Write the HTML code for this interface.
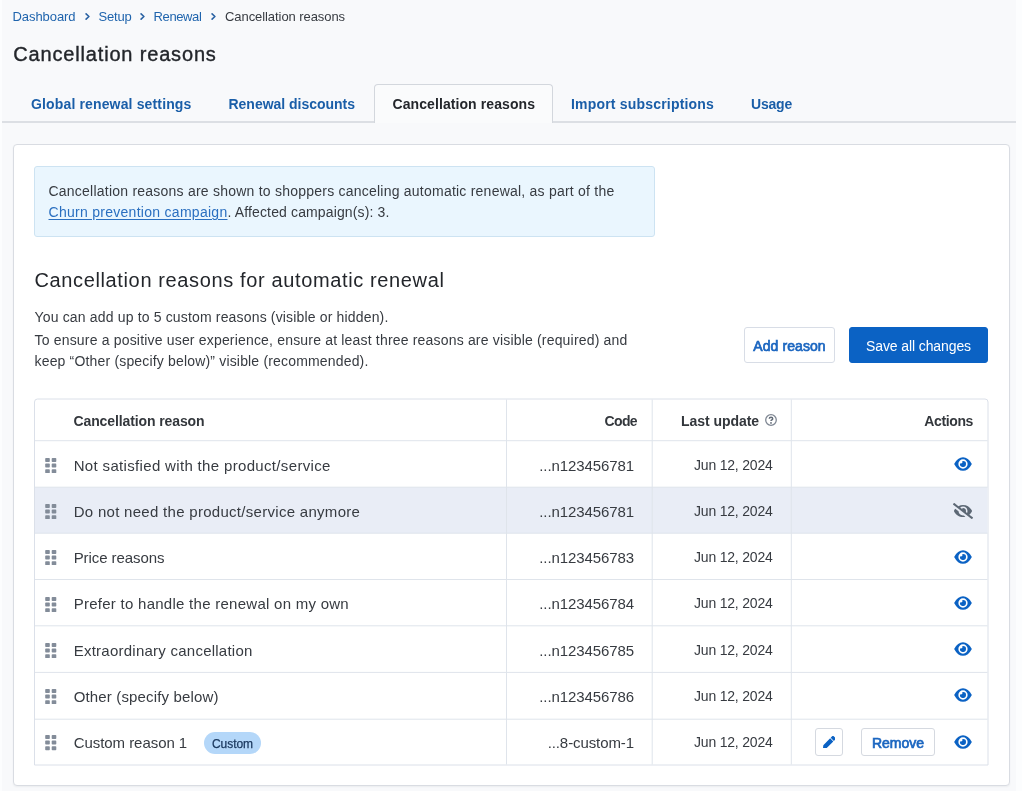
<!DOCTYPE html>
<html><head><meta charset="utf-8"><title>Cancellation reasons</title>
<style>
*{box-sizing:border-box;margin:0;padding:0}
html,body{width:1022px;height:791px;overflow:hidden}
body{background:#f8f9fb;font-family:"Liberation Sans",sans-serif;color:#373b41;position:relative}
#root{position:absolute;left:0;top:0;width:1022px;height:791px;will-change:transform}
.abs{position:absolute;white-space:nowrap}
.edgeL{left:0;top:0;width:2px;height:791px;background:#fcfdfe}
.edgeR{left:1016px;top:0;width:6px;height:791px;background:#fcfdfe}
.bc{top:9px;font-size:13px;line-height:16px;color:#1f64ad}
.bc.cur{color:#373b41}
.chev{top:13.3px;width:5px;height:7px}
.title{left:13.3px;top:42px;font-size:20px;line-height:24px;font-weight:400;-webkit-text-stroke:.38px #23262b;color:#23262b;letter-spacing:.83px}
.tabline{left:2px;top:121px;width:1014px;height:2px;background:#dcdfe4}
.tab{top:96px;font-size:14px;line-height:16px;font-weight:700;color:#1a5ea8}
.tabact{left:374px;top:84px;width:179px;height:39px;background:#fafbfc;border:1px solid #d3d7dd;border-bottom:none;border-radius:4px 4px 0 0}
.panel{left:13px;top:144px;width:997px;height:642px;background:#fff;border:1px solid #d9dce2;border-radius:4px;box-shadow:0 1px 2px rgba(40,50,70,.06)}
.info{left:34px;top:166px;width:621px;height:71px;background:#eaf6fe;border:1px solid #cde3f2;border-radius:3px}
.t14{font-size:14px;line-height:21px;color:#373b41}
a.lnk{color:#2a6fc0;text-decoration:underline;text-underline-offset:2px}
.h2{font-size:20px;line-height:26px;color:#23262b;letter-spacing:.63px}
.btn{display:flex;align-items:center;justify-content:center;font-size:14px;font-weight:700;color:#1b66c0;background:#fff;border:1px solid #d8dde6;border-radius:3px}
.btn.pri{background:#0b62c4;border-color:#0b62c4;color:#fff;font-weight:400}
.grid{left:30px;top:395px;width:962px;height:375px}
.th{font-size:14px;line-height:20px;font-weight:700;color:#33373c}
.td{font-size:15px;line-height:20px;color:#373b41}
.td.d{font-size:14px}
.badge{display:flex;align-items:center;justify-content:center;border-radius:11px;background:#b4d7f9;color:#1c3a60;font-size:12px}
.sbtn{display:flex;align-items:center;justify-content:center;background:#fff;border:1px solid #d5d9e0;border-radius:3px;font-size:14px;font-weight:700;color:#1b66c0}
</style></head><body>
<div id="root">
<div class="abs edgeL"></div><div class="abs edgeR"></div>

<!-- breadcrumb -->
<div class="abs bc" style="left:12.5px;letter-spacing:-.07px">Dashboard</div>
<svg class="abs chev" style="left:85px" viewBox="0 0 5 7"><path d="M1.1 .9 3.9 3.5 1.1 6.1" fill="none" stroke="#2a62a3" stroke-width="1.6" stroke-linecap="round" stroke-linejoin="round"/></svg>
<div class="abs bc" style="left:98.5px;letter-spacing:-.2px">Setup</div>
<svg class="abs chev" style="left:140px" viewBox="0 0 5 7"><path d="M1.1 .9 3.9 3.5 1.1 6.1" fill="none" stroke="#2a62a3" stroke-width="1.6" stroke-linecap="round" stroke-linejoin="round"/></svg>
<div class="abs bc" style="left:153.5px;letter-spacing:-.37px">Renewal</div>
<svg class="abs chev" style="left:210.5px" viewBox="0 0 5 7"><path d="M1.1 .9 3.9 3.5 1.1 6.1" fill="none" stroke="#2a62a3" stroke-width="1.6" stroke-linecap="round" stroke-linejoin="round"/></svg>
<div class="abs bc cur" style="left:225px;letter-spacing:-.07px">Cancellation reasons</div>
<div class="abs title">Cancellation reasons</div>

<!-- tabs -->
<div class="abs tabline"></div><div class="abs tabact"></div>
<div class="abs tab" style="left:31px;letter-spacing:0.145px">Global renewal settings</div>
<div class="abs tab" style="left:228.5px;letter-spacing:-0.02px">Renewal discounts</div>
<div class="abs tab" style="left:392.5px;color:#23262b;letter-spacing:0.085px">Cancellation reasons</div>
<div class="abs tab" style="left:571px;letter-spacing:0.19px">Import subscriptions</div>
<div class="abs tab" style="left:751px;letter-spacing:-0.2px">Usage</div>

<!-- panel -->
<div class="abs panel"></div><div class="abs info"></div>
<div class="abs t14" style="left:48.5px;top:181px;letter-spacing:.229px">Cancellation reasons are shown to shoppers canceling automatic renewal, as part of the</div>
<div class="abs t14" style="left:48.5px;top:202px"><a class="lnk" style="letter-spacing:.28px">Churn prevention campaign</a><span style="letter-spacing:.135px">. Affected campaign(s): 3.</span></div>
<div class="abs h2" style="left:34.5px;top:267px">Cancellation reasons for automatic renewal</div>
<div class="abs t14" style="left:34.5px;top:307px;letter-spacing:.163px">You can add up to 5 custom reasons (visible or hidden).</div>
<div class="abs t14" style="left:34.5px;top:329.7px;letter-spacing:.182px">To ensure a positive user experience, ensure at least three reasons are visible (required) and</div>
<div class="abs t14" style="left:34.5px;top:351px;letter-spacing:.172px">keep “Other (specify below)” visible (recommended).</div>
<div class="abs btn" style="left:744px;top:327px;width:91px;height:36px"><span style="letter-spacing:.09px;font-weight:400;-webkit-text-stroke:.7px #1b66c0;position:relative;top:1px">Add reason</span></div>
<div class="abs btn pri" style="left:849px;top:327px;width:139px;height:36px"><span style="letter-spacing:-.1px;position:relative;top:1px">Save all changes</span></div>

<!-- table grid -->
<svg class="abs grid" viewBox="0 0 962 375"><path d="M4.5 370.0V7.0a3 3 0 0 1 3-3H955.0a3 3 0 0 1 3 3V370.0Z" fill="#fff" stroke="#dbe0e9" stroke-width="1"/><rect x="5.0" y="92.19999999999999" width="952.5" height="46.00000000000006" fill="#e9edf6"/><rect x="5.0" y="45.20" width="952.5" height="1" fill="#dfe4eb"/><rect x="5.0" y="91.70" width="952.5" height="1" fill="#dfe4eb"/><rect x="5.0" y="137.70" width="952.5" height="1" fill="#dfe4eb"/><rect x="5.0" y="184.00" width="952.5" height="1" fill="#dfe4eb"/><rect x="5.0" y="230.30" width="952.5" height="1" fill="#dfe4eb"/><rect x="5.0" y="276.90" width="952.5" height="1" fill="#dfe4eb"/><rect x="5.0" y="323.70" width="952.5" height="1" fill="#dfe4eb"/><rect x="476.00" y="4.5" width="1" height="365.0" fill="#dfe4eb"/><rect x="621.70" y="4.5" width="1" height="365.0" fill="#dfe4eb"/><rect x="760.80" y="4.5" width="1" height="365.0" fill="#dfe4eb"/></svg>
<div class="abs th" style="left:73.5px;top:411px;letter-spacing:-.11px">Cancellation reason</div>
<div class="abs th" style="right:385px;top:411px;letter-spacing:-.62px">Code</div>
<div class="abs th" style="left:681px;top:411px;letter-spacing:-.05px">Last update</div>
<svg class="abs" style="left:765px;top:414px;width:12px;height:12px" viewBox="0 0 12 12"><circle cx="6" cy="6" r="5.3" fill="none" stroke="#7f8793" stroke-width="1.3"/><path d="M4.3 4.8c0-1 .75-1.6 1.7-1.6s1.7.6 1.7 1.5c0 1.2-1.7 1.2-1.7 2.4" fill="none" stroke="#626b77" stroke-width="1.5"/><circle cx="6" cy="8.9" r=".9" fill="#626b77"/></svg>
<div class="abs th" style="right:49px;top:411px;letter-spacing:-.37px">Actions</div>

<!-- row 1 -->
<svg class="abs" style="left:44.5px;top:457.70px;width:12px;height:15.2px" viewBox="0 0 12 15.2"><rect x="0.2" y="0" width="4.6" height="4" rx=".8" fill="#838c99"/><rect x="0.2" y="5.6" width="4.6" height="4" rx=".8" fill="#838c99"/><rect x="0.2" y="11.2" width="4.6" height="4" rx=".8" fill="#838c99"/><rect x="6.7" y="0" width="4.6" height="4" rx=".8" fill="#838c99"/><rect x="6.7" y="5.6" width="4.6" height="4" rx=".8" fill="#838c99"/><rect x="6.7" y="11.2" width="4.6" height="4" rx=".8" fill="#838c99"/></svg>
<div class="abs td" style="left:73.7px;top:455.50px;letter-spacing:0.336px">Not satisfied with the product/service</div>
<div class="abs td" style="right:388px;top:455.50px;letter-spacing:-.09px">...n123456781</div>
<div class="abs td d" style="left:694px;top:454.65px;letter-spacing:-.2px">Jun 12, 2024</div>
<svg class="abs" style="left:954.4px;top:457.05px;width:18px;height:14px" viewBox="0 0 18 14"><path fill="#0b62c4" fill-rule="evenodd" d="M.15 7C2.5 2.4 5.6.15 9 .15S15.5 2.4 17.85 7C15.5 11.6 12.4 13.85 9 13.85S2.5 11.6.15 7ZM9 2.35a4.65 4.65 0 1 0 0 9.3 4.65 4.65 0 0 0 0-9.3Z"/><path fill="#0b62c4" d="M9 4a2.98 2.98 0 0 0-.79.118 1.495 1.495 0 0 1-2.09 2.09A2.993 2.993 0 1 0 9 4z"/></svg>

<!-- row 2 -->
<svg class="abs" style="left:44.5px;top:503.98px;width:12px;height:15.2px" viewBox="0 0 12 15.2"><rect x="0.2" y="0" width="4.6" height="4" rx=".8" fill="#838c99"/><rect x="0.2" y="5.6" width="4.6" height="4" rx=".8" fill="#838c99"/><rect x="0.2" y="11.2" width="4.6" height="4" rx=".8" fill="#838c99"/><rect x="6.7" y="0" width="4.6" height="4" rx=".8" fill="#838c99"/><rect x="6.7" y="5.6" width="4.6" height="4" rx=".8" fill="#838c99"/><rect x="6.7" y="11.2" width="4.6" height="4" rx=".8" fill="#838c99"/></svg>
<div class="abs td" style="left:73.7px;top:501.78px;letter-spacing:0.291px">Do not need the product/service anymore</div>
<div class="abs td" style="right:388px;top:501.78px;letter-spacing:-.09px">...n123456781</div>
<div class="abs td d" style="left:694px;top:500.93px;letter-spacing:-.2px">Jun 12, 2024</div>
<svg class="abs" style="left:953px;top:502.78px;width:20px;height:16px" viewBox="0 0 640 512"><path fill="#5d6875" d="M320 400c-75.85 0-137.25-58.71-142.9-133.11L72.2 185.82c-13.79 17.3-26.48 35.59-36.72 55.59a32.35 32.35 0 0 0 0 29.19C89.71 376.41 197.07 448 320 448c26.91 0 52.87-4 77.89-10.46L346 397.39a144.13 144.13 0 0 1-26 2.61zm313.82 58.1l-110.55-85.44a331.25 331.25 0 0 0 81.25-102.07 32.35 32.35 0 0 0 0-29.19C550.29 135.59 442.93 64 320 64a308.15 308.15 0 0 0-147.32 37.7L45.46 3.37A16 16 0 0 0 23 6.18L3.37 31.45A16 16 0 0 0 6.18 53.9l588.36 454.73a16 16 0 0 0 22.46-2.81l19.64-25.27a16 16 0 0 0-2.82-22.45zm-183.72-142l-39.3-30.38A94.75 94.75 0 0 0 416 256a94.76 94.76 0 0 0-121.31-92.21A47.65 47.65 0 0 1 304 192a46.64 46.64 0 0 1-1.54 10l-73.61-56.89A142.31 142.31 0 0 1 320 112a143.92 143.92 0 0 1 144 144c0 21.63-5.29 41.79-13.9 60.11z"/></svg>

<!-- row 3 -->
<svg class="abs" style="left:44.5px;top:550.26px;width:12px;height:15.2px" viewBox="0 0 12 15.2"><rect x="0.2" y="0" width="4.6" height="4" rx=".8" fill="#838c99"/><rect x="0.2" y="5.6" width="4.6" height="4" rx=".8" fill="#838c99"/><rect x="0.2" y="11.2" width="4.6" height="4" rx=".8" fill="#838c99"/><rect x="6.7" y="0" width="4.6" height="4" rx=".8" fill="#838c99"/><rect x="6.7" y="5.6" width="4.6" height="4" rx=".8" fill="#838c99"/><rect x="6.7" y="11.2" width="4.6" height="4" rx=".8" fill="#838c99"/></svg>
<div class="abs td" style="left:73.7px;top:548.06px;letter-spacing:-0.077px">Price reasons</div>
<div class="abs td" style="right:388px;top:548.06px;letter-spacing:-.09px">...n123456783</div>
<div class="abs td d" style="left:694px;top:547.21px;letter-spacing:-.2px">Jun 12, 2024</div>
<svg class="abs" style="left:954.4px;top:549.61px;width:18px;height:14px" viewBox="0 0 18 14"><path fill="#0b62c4" fill-rule="evenodd" d="M.15 7C2.5 2.4 5.6.15 9 .15S15.5 2.4 17.85 7C15.5 11.6 12.4 13.85 9 13.85S2.5 11.6.15 7ZM9 2.35a4.65 4.65 0 1 0 0 9.3 4.65 4.65 0 0 0 0-9.3Z"/><path fill="#0b62c4" d="M9 4a2.98 2.98 0 0 0-.79.118 1.495 1.495 0 0 1-2.09 2.09A2.993 2.993 0 1 0 9 4z"/></svg>

<!-- row 4 -->
<svg class="abs" style="left:44.5px;top:596.54px;width:12px;height:15.2px" viewBox="0 0 12 15.2"><rect x="0.2" y="0" width="4.6" height="4" rx=".8" fill="#838c99"/><rect x="0.2" y="5.6" width="4.6" height="4" rx=".8" fill="#838c99"/><rect x="0.2" y="11.2" width="4.6" height="4" rx=".8" fill="#838c99"/><rect x="6.7" y="0" width="4.6" height="4" rx=".8" fill="#838c99"/><rect x="6.7" y="5.6" width="4.6" height="4" rx=".8" fill="#838c99"/><rect x="6.7" y="11.2" width="4.6" height="4" rx=".8" fill="#838c99"/></svg>
<div class="abs td" style="left:73.7px;top:594.34px;letter-spacing:0.266px">Prefer to handle the renewal on my own</div>
<div class="abs td" style="right:388px;top:594.34px;letter-spacing:-.09px">...n123456784</div>
<div class="abs td d" style="left:694px;top:593.49px;letter-spacing:-.2px">Jun 12, 2024</div>
<svg class="abs" style="left:954.4px;top:595.89px;width:18px;height:14px" viewBox="0 0 18 14"><path fill="#0b62c4" fill-rule="evenodd" d="M.15 7C2.5 2.4 5.6.15 9 .15S15.5 2.4 17.85 7C15.5 11.6 12.4 13.85 9 13.85S2.5 11.6.15 7ZM9 2.35a4.65 4.65 0 1 0 0 9.3 4.65 4.65 0 0 0 0-9.3Z"/><path fill="#0b62c4" d="M9 4a2.98 2.98 0 0 0-.79.118 1.495 1.495 0 0 1-2.09 2.09A2.993 2.993 0 1 0 9 4z"/></svg>

<!-- row 5 -->
<svg class="abs" style="left:44.5px;top:642.82px;width:12px;height:15.2px" viewBox="0 0 12 15.2"><rect x="0.2" y="0" width="4.6" height="4" rx=".8" fill="#838c99"/><rect x="0.2" y="5.6" width="4.6" height="4" rx=".8" fill="#838c99"/><rect x="0.2" y="11.2" width="4.6" height="4" rx=".8" fill="#838c99"/><rect x="6.7" y="0" width="4.6" height="4" rx=".8" fill="#838c99"/><rect x="6.7" y="5.6" width="4.6" height="4" rx=".8" fill="#838c99"/><rect x="6.7" y="11.2" width="4.6" height="4" rx=".8" fill="#838c99"/></svg>
<div class="abs td" style="left:73.7px;top:640.62px;letter-spacing:0.244px">Extraordinary cancellation</div>
<div class="abs td" style="right:388px;top:640.62px;letter-spacing:-.09px">...n123456785</div>
<div class="abs td d" style="left:694px;top:639.77px;letter-spacing:-.2px">Jun 12, 2024</div>
<svg class="abs" style="left:954.4px;top:642.17px;width:18px;height:14px" viewBox="0 0 18 14"><path fill="#0b62c4" fill-rule="evenodd" d="M.15 7C2.5 2.4 5.6.15 9 .15S15.5 2.4 17.85 7C15.5 11.6 12.4 13.85 9 13.85S2.5 11.6.15 7ZM9 2.35a4.65 4.65 0 1 0 0 9.3 4.65 4.65 0 0 0 0-9.3Z"/><path fill="#0b62c4" d="M9 4a2.98 2.98 0 0 0-.79.118 1.495 1.495 0 0 1-2.09 2.09A2.993 2.993 0 1 0 9 4z"/></svg>

<!-- row 6 -->
<svg class="abs" style="left:44.5px;top:689.10px;width:12px;height:15.2px" viewBox="0 0 12 15.2"><rect x="0.2" y="0" width="4.6" height="4" rx=".8" fill="#838c99"/><rect x="0.2" y="5.6" width="4.6" height="4" rx=".8" fill="#838c99"/><rect x="0.2" y="11.2" width="4.6" height="4" rx=".8" fill="#838c99"/><rect x="6.7" y="0" width="4.6" height="4" rx=".8" fill="#838c99"/><rect x="6.7" y="5.6" width="4.6" height="4" rx=".8" fill="#838c99"/><rect x="6.7" y="11.2" width="4.6" height="4" rx=".8" fill="#838c99"/></svg>
<div class="abs td" style="left:73.7px;top:686.90px;letter-spacing:0.154px">Other (specify below)</div>
<div class="abs td" style="right:388px;top:686.90px;letter-spacing:-.09px">...n123456786</div>
<div class="abs td d" style="left:694px;top:686.05px;letter-spacing:-.2px">Jun 12, 2024</div>
<svg class="abs" style="left:954.4px;top:688.45px;width:18px;height:14px" viewBox="0 0 18 14"><path fill="#0b62c4" fill-rule="evenodd" d="M.15 7C2.5 2.4 5.6.15 9 .15S15.5 2.4 17.85 7C15.5 11.6 12.4 13.85 9 13.85S2.5 11.6.15 7ZM9 2.35a4.65 4.65 0 1 0 0 9.3 4.65 4.65 0 0 0 0-9.3Z"/><path fill="#0b62c4" d="M9 4a2.98 2.98 0 0 0-.79.118 1.495 1.495 0 0 1-2.09 2.09A2.993 2.993 0 1 0 9 4z"/></svg>

<!-- row 7 -->
<svg class="abs" style="left:44.5px;top:735.38px;width:12px;height:15.2px" viewBox="0 0 12 15.2"><rect x="0.2" y="0" width="4.6" height="4" rx=".8" fill="#838c99"/><rect x="0.2" y="5.6" width="4.6" height="4" rx=".8" fill="#838c99"/><rect x="0.2" y="11.2" width="4.6" height="4" rx=".8" fill="#838c99"/><rect x="6.7" y="0" width="4.6" height="4" rx=".8" fill="#838c99"/><rect x="6.7" y="5.6" width="4.6" height="4" rx=".8" fill="#838c99"/><rect x="6.7" y="11.2" width="4.6" height="4" rx=".8" fill="#838c99"/></svg>
<div class="abs td" style="left:73.7px;top:733.18px;letter-spacing:-0.052px">Custom reason 1</div>
<div class="abs td" style="right:388px;top:733.18px;letter-spacing:-.09px">...8-custom-1</div>
<div class="abs td d" style="left:694px;top:732.33px;letter-spacing:-.2px">Jun 12, 2024</div>
<svg class="abs" style="left:954.4px;top:734.73px;width:18px;height:14px" viewBox="0 0 18 14"><path fill="#0b62c4" fill-rule="evenodd" d="M.15 7C2.5 2.4 5.6.15 9 .15S15.5 2.4 17.85 7C15.5 11.6 12.4 13.85 9 13.85S2.5 11.6.15 7ZM9 2.35a4.65 4.65 0 1 0 0 9.3 4.65 4.65 0 0 0 0-9.3Z"/><path fill="#0b62c4" d="M9 4a2.98 2.98 0 0 0-.79.118 1.495 1.495 0 0 1-2.09 2.09A2.993 2.993 0 1 0 9 4z"/></svg>
<div class="abs badge" style="left:204px;top:732.2px;width:57px;height:21.6px"><span style="letter-spacing:-.06px;position:relative;top:.6px;-webkit-text-stroke:.25px #1c3a60">Custom</span></div>
<div class="abs sbtn" style="left:815px;top:728px;width:28px;height:28px"><svg style="width:12.6px;height:12.6px" viewBox="0 0 512 512"><path fill="#0b62c4" d="M290.74 93.24l128.02 128.02-277.99 277.99-114.14 12.6C11.35 513.54-1.56 500.62.14 485.34l12.7-114.22 277.9-277.88zm207.2-19.06l-60.11-60.11c-18.75-18.75-49.16-18.75-67.91 0l-56.55 56.55 128.02 128.02 56.55-56.55c18.75-18.76 18.75-49.16 0-67.91z"/></svg></div>
<div class="abs sbtn" style="left:861px;top:728px;width:74px;height:28px"><span style="letter-spacing:-.02px;font-weight:400;-webkit-text-stroke:.7px #1b66c0;position:relative;top:.7px">Remove</span></div>
</div>
</body></html>
